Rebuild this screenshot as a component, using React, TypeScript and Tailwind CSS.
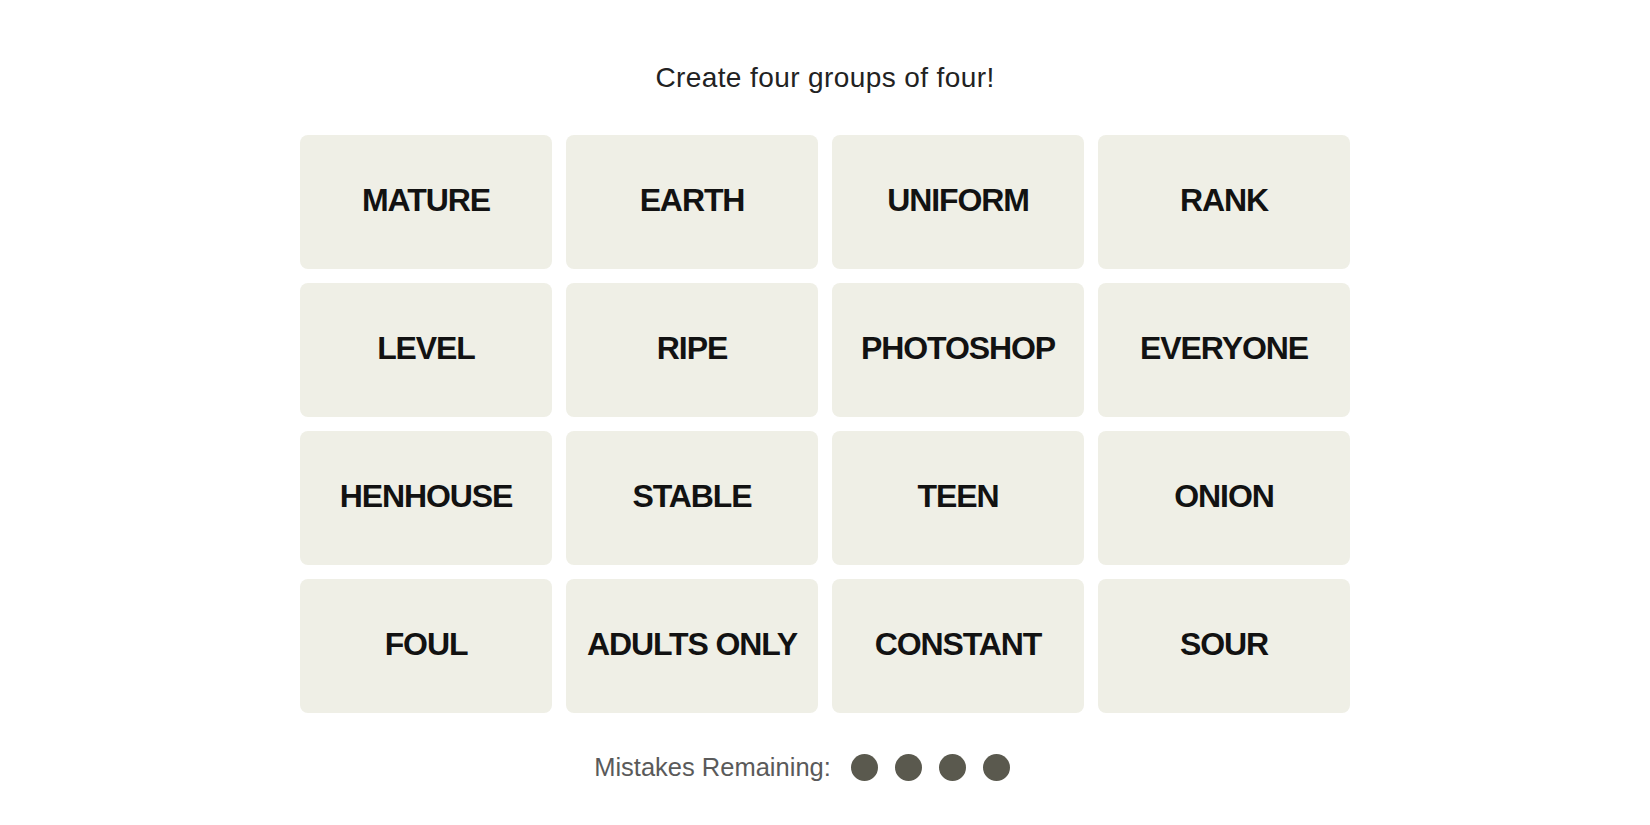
import React from "react";

const words = [
  "MATURE", "EARTH", "UNIFORM", "RANK",
  "LEVEL", "RIPE", "PHOTOSHOP", "EVERYONE",
  "HENHOUSE", "STABLE", "TEEN", "ONION",
  "FOUL", "ADULTS ONLY", "CONSTANT", "SOUR",
];

export default function App() {
  return (
    <div className="min-h-screen w-full bg-white flex flex-col items-center pt-[60px] font-['Liberation_Sans',Arial,sans-serif]">
      <h1 className="text-[28px] leading-[36px] font-normal text-[#222] tracking-[0.4px]">
        Create four groups of four!
      </h1>

      <div className="mt-[39px] grid grid-cols-[repeat(4,252px)] grid-rows-[repeat(4,134px)] gap-[14px]">
        {words.map((w) => (
          <button
            key={w}
            className="flex items-center justify-center rounded-[8px] bg-[#efefe6] pb-[4px] text-[32px] font-bold tracking-[-1.1px] text-[#121212]"
          >
            {w}
          </button>
        ))}
      </div>

      <div className="mt-[36px] flex items-center h-[36px] pr-[46px]">
        <span className="text-[25.5px] text-[#5a5a5a]">Mistakes Remaining:</span>
        <div className="ml-[20px] flex gap-[17px]">
          {[0, 1, 2, 3].map((i) => (
            <span key={i} className="block w-[27px] h-[27px] rounded-full bg-[#5a594e]" />
          ))}
        </div>
      </div>
    </div>
  );
}
